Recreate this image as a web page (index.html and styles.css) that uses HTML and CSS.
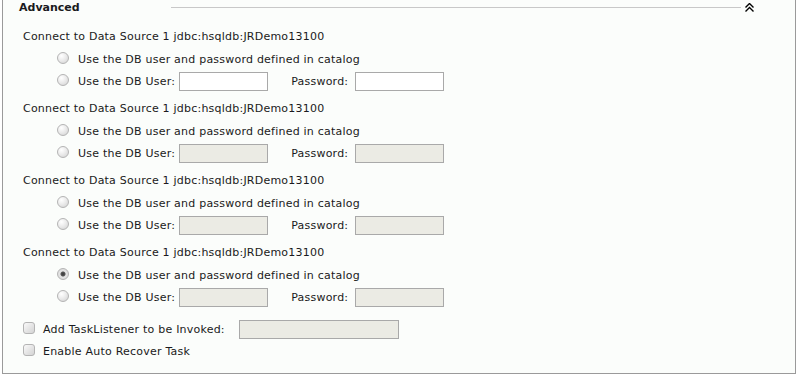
FILE: index.html
```html
<!DOCTYPE html>
<html lang="en">
<head>
    <meta charset="UTF-8">
    <title>Advanced</title>
    <link rel="stylesheet" href="styles.css">
</head>
<body>
    <div class="panel">
        <div class="panel-head">
            <span class="panel-title">Advanced</span>
            <span class="rule"></span>
            <svg class="collapse" width="9" height="9" viewBox="0 0 9 9">
                <polyline points="0.5,4.5 4.5,0.5 8.5,4.5" fill="none" stroke="#000" stroke-width="1.4"/>
                <polyline points="0.5,8.5 4.5,4.5 8.5,8.5" fill="none" stroke="#000" stroke-width="1.4"/>
            </svg>
        </div>

        <div class="ds-group">
            <div class="ds-title">Connect to Data Source 1 jdbc:hsqldb:JRDemo13100</div>
            <div class="opt"><input type="radio" name="ds1"><span>Use the DB user and password defined in catalog</span></div>
            <div class="opt"><input type="radio" name="ds1"><span>Use the DB User:</span><input class="field" type="text"><span class="pw-label">Password:</span><input class="field" type="password"></div>
        </div>
        <div class="ds-group">
            <div class="ds-title">Connect to Data Source 1 jdbc:hsqldb:JRDemo13100</div>
            <div class="opt"><input type="radio" name="ds2"><span>Use the DB user and password defined in catalog</span></div>
            <div class="opt"><input type="radio" name="ds2"><span>Use the DB User:</span><input class="field" type="text" disabled><span class="pw-label">Password:</span><input class="field" type="password" disabled></div>
        </div>
        <div class="ds-group">
            <div class="ds-title">Connect to Data Source 1 jdbc:hsqldb:JRDemo13100</div>
            <div class="opt"><input type="radio" name="ds3"><span>Use the DB user and password defined in catalog</span></div>
            <div class="opt"><input type="radio" name="ds3"><span>Use the DB User:</span><input class="field" type="text" disabled><span class="pw-label">Password:</span><input class="field" type="password" disabled></div>
        </div>
        <div class="ds-group">
            <div class="ds-title">Connect to Data Source 1 jdbc:hsqldb:JRDemo13100</div>
            <div class="opt"><input type="radio" name="ds4" checked><span>Use the DB user and password defined in catalog</span></div>
            <div class="opt"><input type="radio" name="ds4"><span>Use the DB User:</span><input class="field" type="text" disabled><span class="pw-label">Password:</span><input class="field" type="password" disabled></div>
        </div>

        <div class="extras">
            <div class="check-row"><input type="checkbox"><span>Add TaskListener to be Invoked:</span><input class="field wide" type="text" disabled></div>
            <div class="check-row"><input type="checkbox"><span>Enable Auto Recover Task</span></div>
        </div>
    </div>
</body>
</html>
```

FILE: styles.css
```css
body {
    margin: 0;
    background: #fff;
    font-family: 'DejaVu Sans', Verdana, sans-serif;
    font-size: 11px;
    letter-spacing: 0.22px;
    color: #1a1a20;
}
.panel {
    margin-left: 2px;
    width: 794px;
    height: 374px;
    box-sizing: border-box;
    background: #fbfdfb;
    border: 1px solid #9a9a9a;
    border-top: none;
    padding: 0 0 0 20px;
}
.panel-head {
    display: flex;
    align-items: center;
    height: 14px;
    margin-left: -4px;
    padding-right: 41px;
}
.panel-title {
    font-weight: bold;
    letter-spacing: 0;
    width: 152px;
}
.rule {
    flex: 1;
    height: 1px;
    background: #c8c8c8;
    margin-right: 4px;
}
.collapse { display: block; }

.ds-group {
    margin-top: 11px;
}
.ds-group + .ds-group { margin-top: 5px; }
.ds-title {
    height: 23px;
    line-height: 23px;
}
.opt {
    display: flex;
    align-items: center;
    height: 22px;
    padding-left: 34px;
}
.opt > span:first-of-type { margin-left: 9px; }
.pw-label { margin: 0 3px 0 23px; }

input[type=radio] {
    appearance: none;
    -webkit-appearance: none;
    margin: 0;
    width: 12px;
    height: 12px;
    border-radius: 50%;
    border: 1px solid #b4b4b4;
    background: radial-gradient(circle at 35% 30%, #ffffff 0%, #ececec 45%, #d0d0d0 100%);
    box-sizing: border-box;
    position: relative;
    top: -1px;
}
input[type=radio]:checked {
    background: radial-gradient(circle at 50% 50%, #3a3a3a 0, #555 2px, #e6e6e6 3px, #d4d4d4 100%);
}
input[type=checkbox] {
    appearance: none;
    -webkit-appearance: none;
    margin: 0;
    width: 12px;
    height: 12px;
    border-radius: 3px;
    border: 1px solid #b4b4b4;
    background: linear-gradient(135deg, #fafafa 0%, #e2e2e2 60%, #d4d4d4 100%);
    box-sizing: border-box;
    position: relative;
    top: -1px;
}
.field {
    width: 89px;
    height: 19px;
    box-sizing: border-box;
    margin: 0 0 0 4px;
    padding: 1px 3px;
    border: 1px solid #a9a9a9;
    background: #fff;
    font: inherit;
}
.field:disabled {
    background: #ebebe4;
}
.field.wide {
    width: 160px;
    margin-left: 14px;
}

.extras {
    margin-top: 10px;
}
.check-row {
    display: flex;
    align-items: center;
    height: 22px;
}
.check-row > span { margin-left: 8px; }
```
